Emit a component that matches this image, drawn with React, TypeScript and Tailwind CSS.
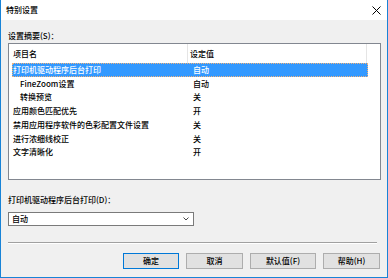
import React from "react";

const rows: { name: string; value: string; indent?: boolean; selected?: boolean }[] = [
  { name: "打印机驱动程序后台打印", value: "自动", selected: true },
  { name: "FineZoom设置", value: "自动", indent: true },
  { name: "转换预览", value: "关", indent: true },
  { name: "应用颜色匹配优先", value: "开" },
  { name: "禁用应用程序软件的色彩配置文件设置", value: "关" },
  { name: "进行浓细线校正", value: "关" },
  { name: "文字清晰化", value: "开" },
];

function Btn({ label, w, focused }: { label: string; w: string; focused?: boolean }) {
  return (
    <div
      className={`${w} h-[16px] flex items-center justify-center bg-[#e1e1e1] border ${
        focused ? "border-[#0078d7]" : "border-[#adadad]"
      } text-[8px] leading-none text-black`}
    >
      {label}
    </div>
  );
}

export default function App() {
  return (
    <div
      className="w-[388px] h-[278px] bg-[#f0f0f0] border-x border-b border-[#1883d7] flex flex-col text-black overflow-hidden font-medium"
      style={{ fontFamily: '"Noto Sans CJK SC", "Noto Sans", sans-serif' }}
    >
      <div className="h-[20px] bg-white flex items-center justify-between pl-[5px] pr-[6px]">
        <span className="text-[8px] leading-none">特别设置</span>
        <svg width="9" height="9" viewBox="0 0 9 9" className="mt-[1px]">
          <path d="M0.5 0.5 L8.5 8.5 M8.5 0.5 L0.5 8.5" stroke="#000" strokeWidth="1" />
        </svg>
      </div>

      <div className="flex flex-col pl-[7px] pr-[6px]">
        <div className="mt-[10px] h-[11px] text-[8px] leading-[11px]">设置摘要(S)：</div>

        <div className="mt-[2px] w-[373px] h-[137px] bg-white border border-[#828790] pl-[3px]">
          <div className="h-[19px] flex items-center text-[8px] leading-none">
            <div className="w-[176px] h-full flex items-center pl-[1px] border-r border-[#e5e5e5]">项目名</div>
            <div className="w-[179px] h-full flex items-center pl-[2px] border-r border-[#e5e5e5]">设定值</div>
          </div>
          <div className="flex flex-col">
            {rows.map((r) => (
              <div
                key={r.name}
                className={`w-[356px] h-[13.75px] flex items-center text-[8px] leading-none ${
                  r.selected ? "bg-[#3399ff] text-white outline outline-1 outline-dotted outline-[#f2b27a] -outline-offset-1" : ""
                }`}
              >
                <div className={`w-[177px] ${r.indent ? "pl-[8px]" : "pl-[1px]"}`}>{r.name}</div>
                <div className="pl-[4px]">{r.value}</div>
              </div>
            ))}
          </div>
        </div>

        <div className="mt-[14px] h-[11px] text-[8px] leading-[11px]">打印机驱动程序后台打印(D)：</div>

        <div className="mt-[7px] w-[186px] h-[14px] bg-white border border-[#7a7a7a] flex items-center justify-between pl-[3px] pr-[4px] text-[8px] leading-none">
          <span>自动</span>
          <svg width="6" height="4" viewBox="0 0 6 4">
            <path d="M0.5 0.5 L3 3 L5.5 0.5" stroke="#333" strokeWidth="0.9" fill="none" />
          </svg>
        </div>

        <div className="mt-[16px] w-[369px] h-[2px] border-t border-[#a0a0a0] border-b border-b-white" />

        <div className="mt-[9px] flex justify-end gap-[7px] pr-[1px]">
          <Btn label="确定" w="w-[56px]" focused />
          <Btn label="取消" w="w-[57px]" />
          <Btn label="默认值(F)" w="w-[66px]" />
          <Btn label="帮助(H)" w="w-[57px]" />
        </div>
      </div>
    </div>
  );
}
